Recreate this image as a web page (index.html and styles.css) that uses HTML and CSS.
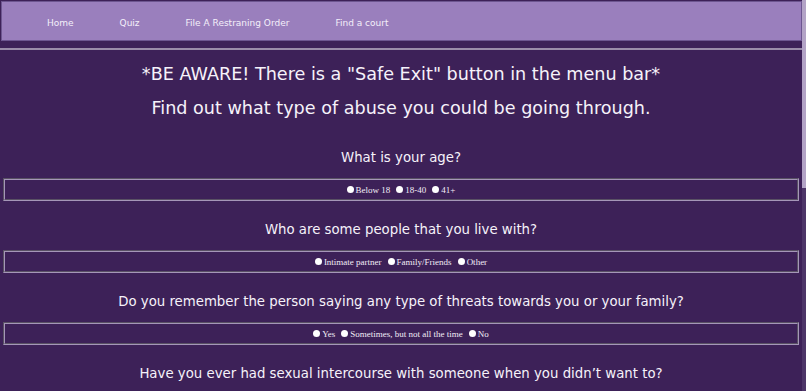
FILE: index.html
```html
<!DOCTYPE html>
<html>
<head>
<meta charset="utf-8">
<title>Quiz</title>
<link rel="stylesheet" href="styles.css">
</head>
<body>
<div class="page">
  <nav class="nav">
    <ul class="nav-list">
      <li><a class="nav-link" href="#">Home</a></li>
      <li><a class="nav-link" href="#">Quiz</a></li>
      <li><a class="nav-link" href="#">File A Restraning Order</a></li>
      <li><a class="nav-link" href="#">Find a court</a></li>
    </ul>
  </nav>
  <hr class="rule">
  <h2 class="intro">*BE AWARE! There is a "Safe Exit" button in the menu bar*</h2>
  <h2 class="intro intro-2">Find out what type of abuse you could be going through.</h2>

  <section class="question first">
    <h3 class="q-title">What is your age?</h3>
    <fieldset class="options">
      <label class="opt"><span class="dot"></span>Below 18</label>
      <label class="opt"><span class="dot"></span>18-40</label>
      <label class="opt"><span class="dot"></span>41+</label>
    </fieldset>
  </section>

  <section class="question">
    <h3 class="q-title">Who are some people that you live with?</h3>
    <fieldset class="options">
      <label class="opt"><span class="dot"></span>Intimate partner</label>
      <label class="opt"><span class="dot"></span>Family/Friends</label>
      <label class="opt"><span class="dot"></span>Other</label>
    </fieldset>
  </section>

  <section class="question">
    <h3 class="q-title">Do you remember the person saying any type of threats towards you or your family?</h3>
    <fieldset class="options">
      <label class="opt"><span class="dot"></span>Yes</label>
      <label class="opt"><span class="dot"></span>Sometimes, but not all the time</label>
      <label class="opt"><span class="dot"></span>No</label>
    </fieldset>
  </section>

  <section class="question">
    <h3 class="q-title">Have you ever had sexual intercourse with someone when you didn’t want to?</h3>
  </section>
</div>
<div class="scrollbar"><div class="thumb"></div></div>
</body>
</html>
```

FILE: styles.css
```css
html, body {
  margin: 0;
  padding: 0;
  background: #3d2158;
  overflow: hidden;
}
body {
  font-family: "DejaVu Sans", "Open Sans", sans-serif;
  color: #f6f2fa;
}
.page {
  width: 802px;
}
.nav {
  margin: 1px 0 0 1px;
  height: 38px;
  background: #9a7fbd;
  border: 1px solid #6d5690;
  display: flex;
  align-items: center;
}
.nav-list {
  list-style: none;
  margin: 0;
  padding: 3px 0 0 22px;
  display: flex;
}
.nav-link {
  display: block;
  padding: 0 23px;
  color: #f4effa;
  text-decoration: none;
  font-size: 9px;
}
.rule {
  margin: 7px 0 0 0;
  border: 0;
  height: 2px;
  background: #9a8ca9;
}
.intro {
  margin: 13px 0 0 0;
  text-align: center;
  font-weight: normal;
  font-size: 17.6px;
  line-height: 22px;
}
.intro-2 {
  margin-top: 12px;
}
.question {
  margin-top: 20px;
}
.question.first {
  margin-top: 30px;
}
.q-title {
  margin: 0;
  text-align: center;
  font-weight: normal;
  font-size: 13.3px;
  line-height: 18px;
}
.options {
  margin: 11px 3px 0 3px;
  padding: 0;
  height: 19px;
  border: 2px groove #a596b8;
  display: flex;
  justify-content: center;
  align-items: center;
  gap: 6px;
  font-family: "Liberation Serif", serif;
  font-size: 9px;
}
.opt {
  display: flex;
  align-items: center;
  color: #f2edf7;
}
.dot {
  width: 7px;
  height: 7px;
  border-radius: 50%;
  background: #ffffff;
  margin-right: 2px;
}
.scrollbar {
  position: fixed;
  top: 0;
  right: 0;
  width: 4px;
  height: 100%;
  background: #4d3568;
}
.thumb {
  height: 188px;
  background: #b3a3c6;
}
```
